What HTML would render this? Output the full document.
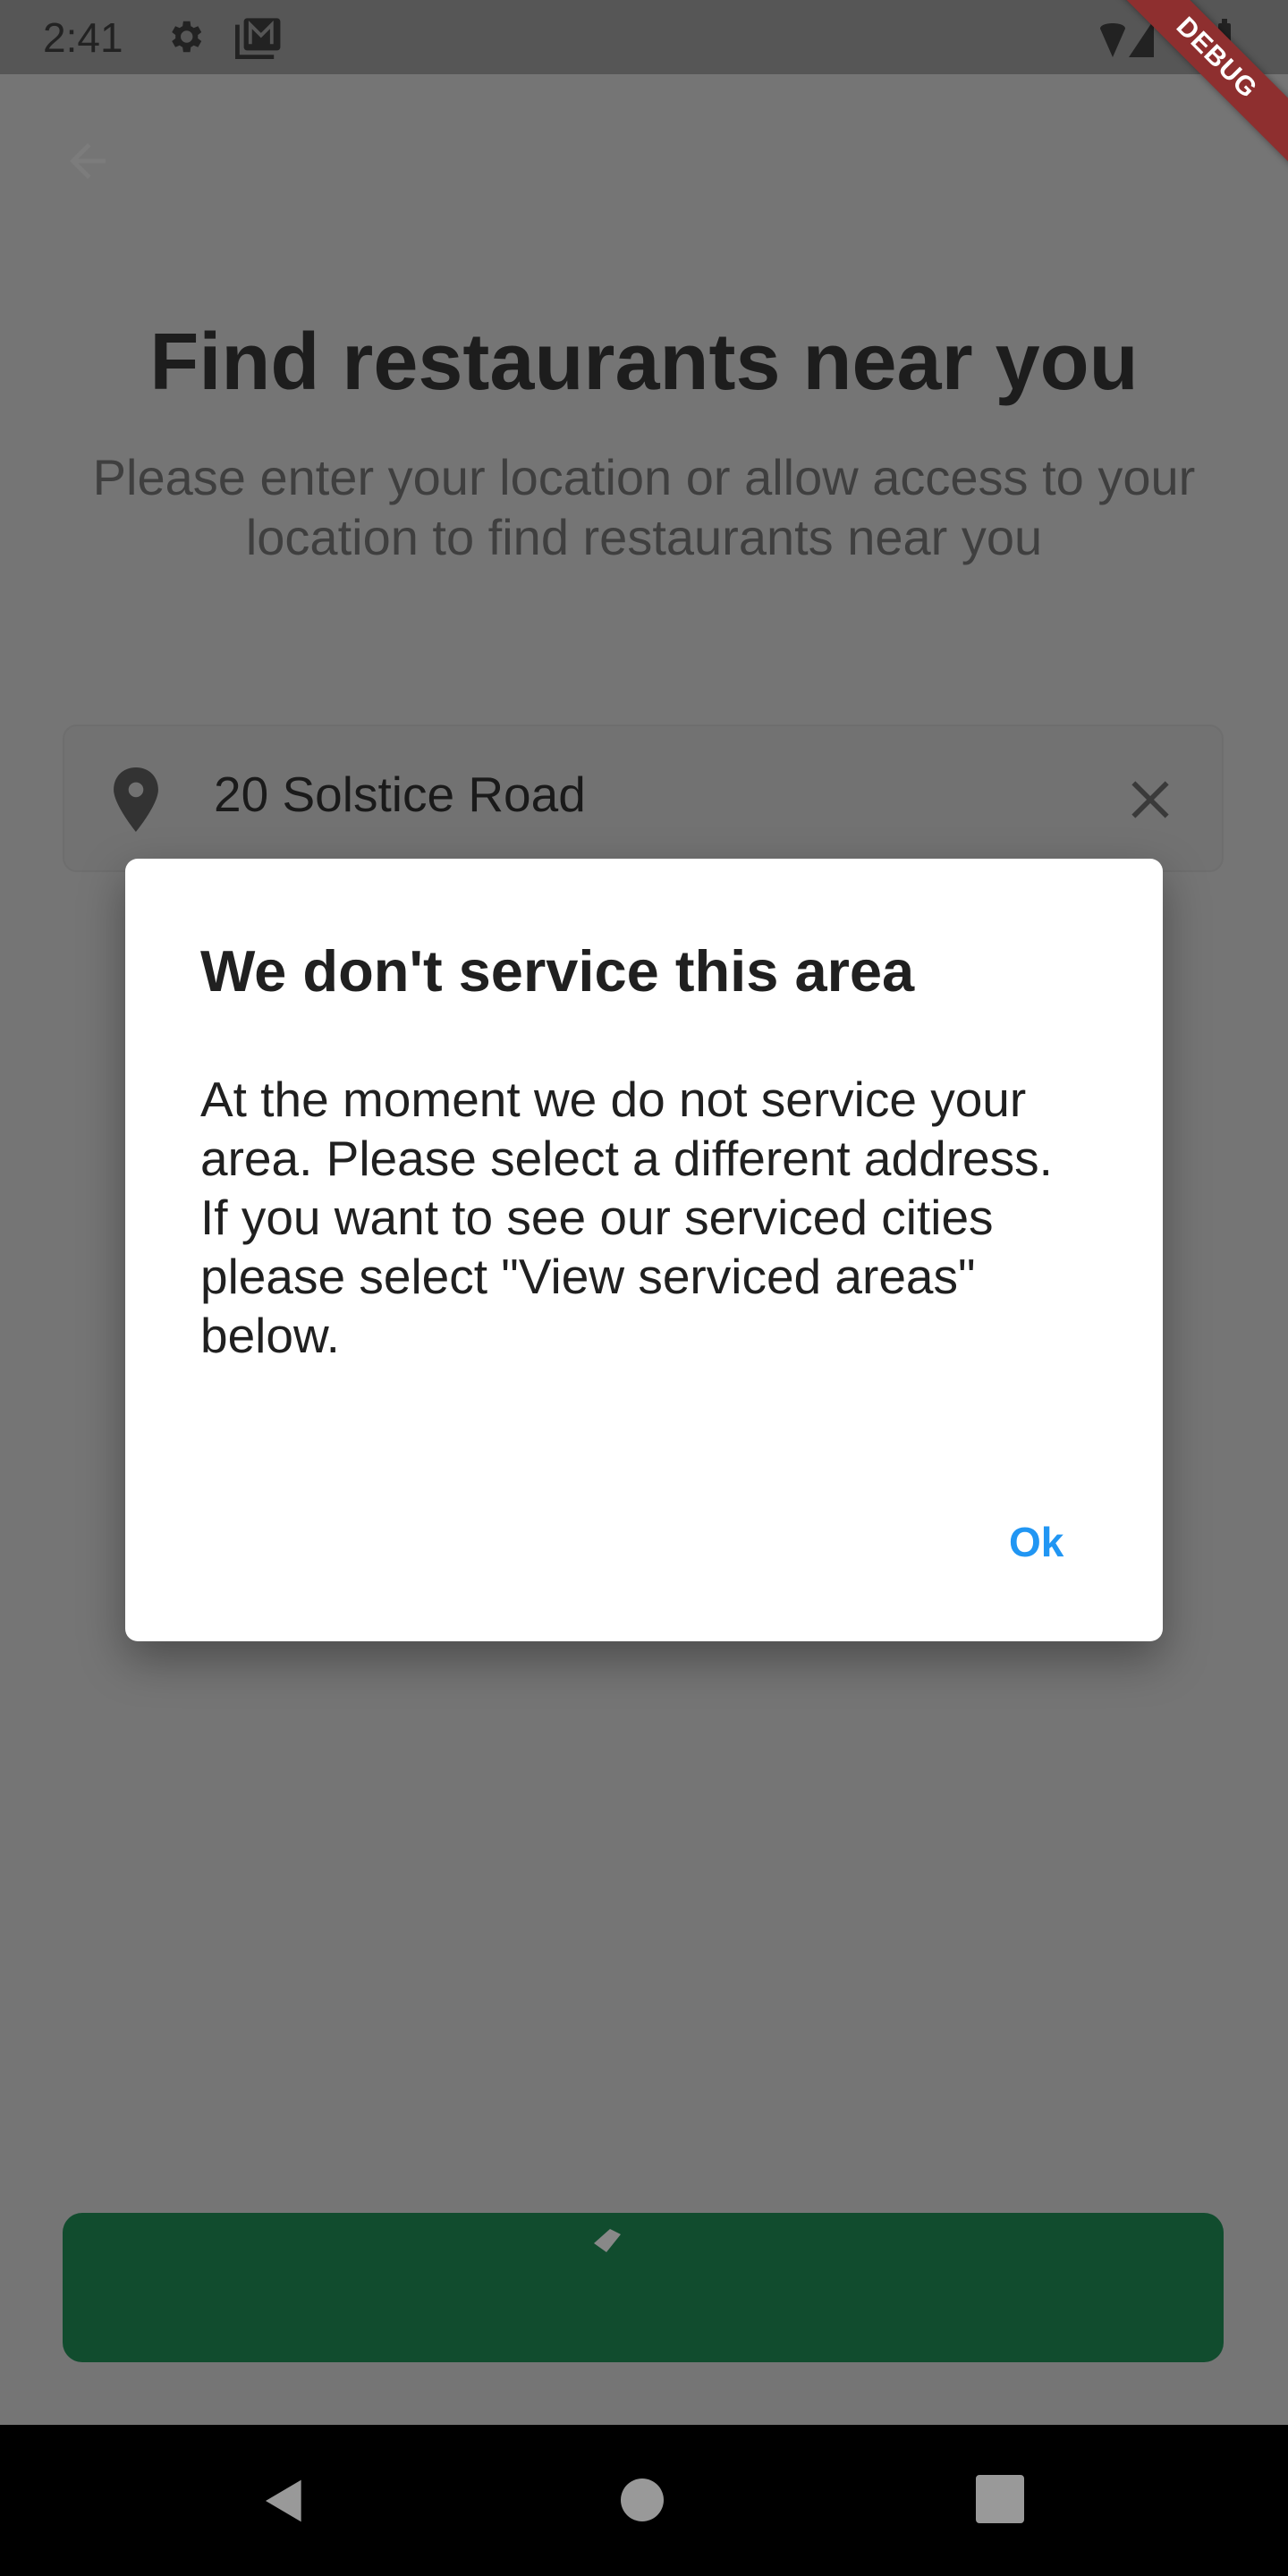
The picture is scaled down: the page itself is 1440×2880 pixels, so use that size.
<!DOCTYPE html>
<html><head><meta charset="utf-8"><style>
*{margin:0;padding:0;box-sizing:border-box}
body{width:1440px;height:2880px;background:#757575;position:relative;overflow:hidden;font-family:"Liberation Sans",sans-serif}
.abs{position:absolute}
</style></head><body>
<div class="abs" style="left:0;top:0;width:1440px;height:83px;background:#565656"></div>
<div class="abs" style="left:48px;top:14px;font-size:46px;color:#222;line-height:56px">2:41</div>
<svg class="abs" style="left:184px;top:18px" width="46" height="46" viewBox="0 0 24 24"><path fill="#222" d="M19.4 13a7.5 7.5 0 0 0 0-2l2.1-1.6-2-3.5-2.5 1a7 7 0 0 0-1.7-1L14.9 3h-4l-.4 2.9a7 7 0 0 0-1.7 1l-2.5-1-2 3.5L6.4 11a7.5 7.5 0 0 0 0 2l-2.1 1.6 2 3.5 2.5-1a7 7 0 0 0 1.7 1l.4 2.9h4l.4-2.9a7 7 0 0 0 1.7-1l2.5 1 2-3.5zM12.9 15.5a3.5 3.5 0 1 1 0-7 3.5 3.5 0 0 1 0 7z"/></svg>
<svg class="abs" style="left:258px;top:18px" width="58" height="48" viewBox="0 0 24 20"><path fill="none" stroke="#222" stroke-width="2" d="M3 4v15h17"/><rect x="6" y="1" width="17" height="15" rx="1.5" fill="#222"/><path fill="none" stroke="#565656" stroke-width="1.6" d="M9 13V4l5 5 5-5v9"/></svg>
<svg class="abs" style="left:1228px;top:18px" width="160" height="48" viewBox="0 0 160 48"><path fill="#222" d="M2 14c0-8 28-8 28 0L16 46z"/><path fill="#222" d="M62 4v42H34z"/><rect x="134" y="8" width="14" height="38" rx="2" fill="#222"/><rect x="138" y="3" width="6" height="6" fill="#222"/></svg>
<div class="abs" style="left:1195px;top:40px;width:330px;height:50px;background:#8e2f2f;transform:rotate(45deg);color:#fff;font-weight:bold;font-size:30px;text-align:center;line-height:50px;letter-spacing:1px;box-shadow:0 0 8px rgba(0,0,0,.4)">DEBUG</div>
<svg class="abs" style="left:68px;top:150px;opacity:.05" width="60" height="60" viewBox="0 0 24 24"><path fill="#fff" d="M20 11H7.8l5.6-5.6L12 4l-8 8 8 8 1.4-1.4L7.8 13H20z"/></svg>
<div class="abs" style="left:0;top:355px;width:1440px;text-align:center;font-size:90px;font-weight:bold;color:#1d1d1d;line-height:100px">Find restaurants near you</div>
<div class="abs" style="left:40px;top:500px;width:1360px;text-align:center;font-size:56px;color:#3f3f3f;line-height:67px">Please enter your location or allow access to your<br>location to find restaurants near you</div>
<div class="abs" style="left:70px;top:810px;width:1298px;height:165px;border:2px solid #6e6e6e;border-radius:16px;background:#727272"></div>
<svg class="abs" style="left:122px;top:858px" width="60" height="72" viewBox="0 0 20 26"><path fill="#333" d="M10 0C4.5 0 1 4 1 9c0 6 9 17 9 17s9-11 9-17c0-5-3.5-9-9-9zm0 12a3 3 0 1 1 0-6 3 3 0 0 1 0 6z"/></svg>
<div class="abs" style="left:239px;top:856px;font-size:55px;color:#1a1a1a;line-height:64px">20 Solstice Road</div>
<svg class="abs" style="left:1258px;top:866px" width="56" height="56" viewBox="0 0 24 24"><path stroke="#3a3a3a" stroke-width="2.4" d="M4 4l16 16M20 4L4 20"/></svg>
<div class="abs" style="left:140px;top:960px;width:1160px;height:875px;background:#fff;border-radius:14px;box-shadow:0 20px 50px rgba(0,0,0,.35)"></div>
<div class="abs" style="left:224px;top:1046px;font-size:65px;font-weight:bold;color:#202020;line-height:80px">We don't service this area</div>
<div class="abs" style="left:224px;top:1196px;white-space:nowrap;font-size:55px;color:#202020;line-height:66px">At the moment we do not service your<br>area. Please select a different address.<br>If you want to see our serviced cities<br>please select "View serviced areas"<br>below.</div>
<div class="abs" style="left:1128px;top:1694px;font-size:46px;font-weight:bold;color:#2196f3;line-height:60px">Ok</div>
<div class="abs" style="left:70px;top:2474px;width:1298px;height:167px;background:#114c2e;border-radius:22px"></div>
<svg class="abs" style="left:648px;top:2486px" width="60" height="50" viewBox="0 0 60 50"><path fill="#888" d="M16 22l18-16 12 6-16 20z"/></svg>
<div class="abs" style="left:0;top:2711px;width:1440px;height:169px;background:#000"></div>
<svg class="abs" style="left:290px;top:2768px" width="56" height="56" viewBox="0 0 24 24"><path fill="#999" d="M20 2v20L3 12z"/></svg>
<div class="abs" style="left:694px;top:2771px;width:48px;height:48px;border-radius:50%;background:#999"></div>
<div class="abs" style="left:1091px;top:2767px;width:54px;height:54px;border-radius:4px;background:#999"></div>
</body></html>
